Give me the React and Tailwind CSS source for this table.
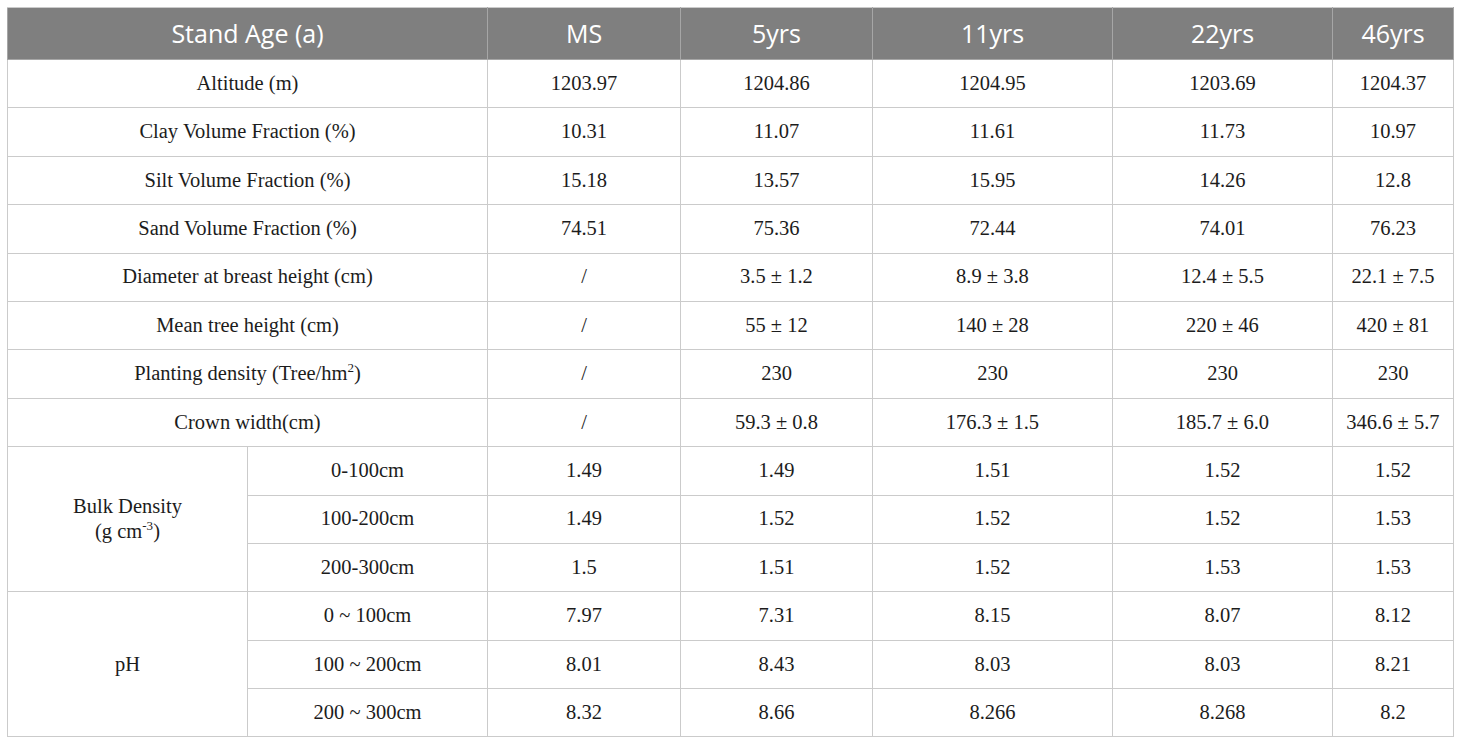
import React from 'react';

const cols = ['MS', '5yrs', '11yrs', '22yrs', '46yrs'];

const Sup = ({ children }) => (
    <sup className="text-[13px] relative -top-[8px]">{children}</sup>
);

const simpleRows = [
    { label: 'Altitude (m)', values: ['1203.97', '1204.86', '1204.95', '1203.69', '1204.37'] },
    { label: 'Clay Volume Fraction (%)', values: ['10.31', '11.07', '11.61', '11.73', '10.97'] },
    { label: 'Silt Volume Fraction (%)', values: ['15.18', '13.57', '15.95', '14.26', '12.8'] },
    { label: 'Sand Volume Fraction (%)', values: ['74.51', '75.36', '72.44', '74.01', '76.23'] },
    { label: 'Diameter at breast height (cm)', values: ['/', '3.5 ± 1.2', '8.9 ± 3.8', '12.4 ± 5.5', '22.1 ± 7.5'] },
    { label: 'Mean tree height (cm)', values: ['/', '55 ± 12', '140 ± 28', '220 ± 46', '420 ± 81'] },
    { label: <>Planting density (Tree/hm<Sup>2</Sup>)</>, values: ['/', '230', '230', '230', '230'] },
    { label: 'Crown width(cm)', values: ['/', '59.3 ± 0.8', '176.3 ± 1.5', '185.7 ± 6.0', '346.6 ± 5.7'] },
];

const groups = [
    {
        label: (
            <>
                Bulk Density<br />
                (g cm<Sup>-3</Sup>)
            </>
        ),
        rows: [
            { depth: '0-100cm', values: ['1.49', '1.49', '1.51', '1.52', '1.52'] },
            { depth: '100-200cm', values: ['1.49', '1.52', '1.52', '1.52', '1.53'] },
            { depth: '200-300cm', values: ['1.5', '1.51', '1.52', '1.53', '1.53'] },
        ],
    },
    {
        label: 'pH',
        rows: [
            { depth: '0 ~ 100cm', values: ['7.97', '7.31', '8.15', '8.07', '8.12'] },
            { depth: '100 ~ 200cm', values: ['8.01', '8.43', '8.03', '8.03', '8.21'] },
            { depth: '200 ~ 300cm', values: ['8.32', '8.66', '8.266', '8.268', '8.2'] },
        ],
    },
];

const cell = "border border-[#cbcbcb] text-center align-middle p-0";

const App = () => {
    return (
        <div className="w-[1460px] h-[744px] bg-white pt-[7px] pl-[7px]">
            <table
                className="border-collapse table-fixed w-[1446px] text-[#1c1c1c] text-[20.5px] leading-tight"
                style={{ fontFamily: '"Liberation Serif", "Times New Roman", serif' }}
            >
                <colgroup>
                    <col className="w-[240px]" />
                    <col className="w-[240px]" />
                    <col className="w-[193px]" />
                    <col className="w-[192px]" />
                    <col className="w-[240px]" />
                    <col className="w-[220px]" />
                    <col className="w-[121px]" />
                </colgroup>
                <thead>
                    {/* Header */}
                    <tr className="h-[52px] bg-[#7f7f7f] text-white text-[25px] font-['Open_Sans',sans-serif]">
                        <th colSpan={2} className="border border-[#a6a6a6] border-t-[#cbcbcb] font-normal">Stand Age (a)</th>
                        {cols.map((c) => (
                            <th key={c} className="border border-[#a6a6a6] border-t-[#cbcbcb] font-normal">{c}</th>
                        ))}
                    </tr>
                </thead>
                <tbody>
                    {simpleRows.map((r, i) => (
                        <tr key={i} className="h-[48.4px]">
                            <td colSpan={2} className={cell}>{r.label}</td>
                            {r.values.map((v, j) => (
                                <td key={j} className={cell}>{v}</td>
                            ))}
                        </tr>
                    ))}
                    {groups.map((g, gi) =>
                        g.rows.map((r, ri) => (
                            <tr key={`${gi}-${ri}`} className="h-[48.4px]">
                                {ri === 0 && (
                                    <td rowSpan={3} className={cell}>{g.label}</td>
                                )}
                                <td className={cell}>{r.depth}</td>
                                {r.values.map((v, j) => (
                                    <td key={j} className={cell}>{v}</td>
                                ))}
                            </tr>
                        ))
                    )}
                </tbody>
            </table>
        </div>
    );
};

export default App;
